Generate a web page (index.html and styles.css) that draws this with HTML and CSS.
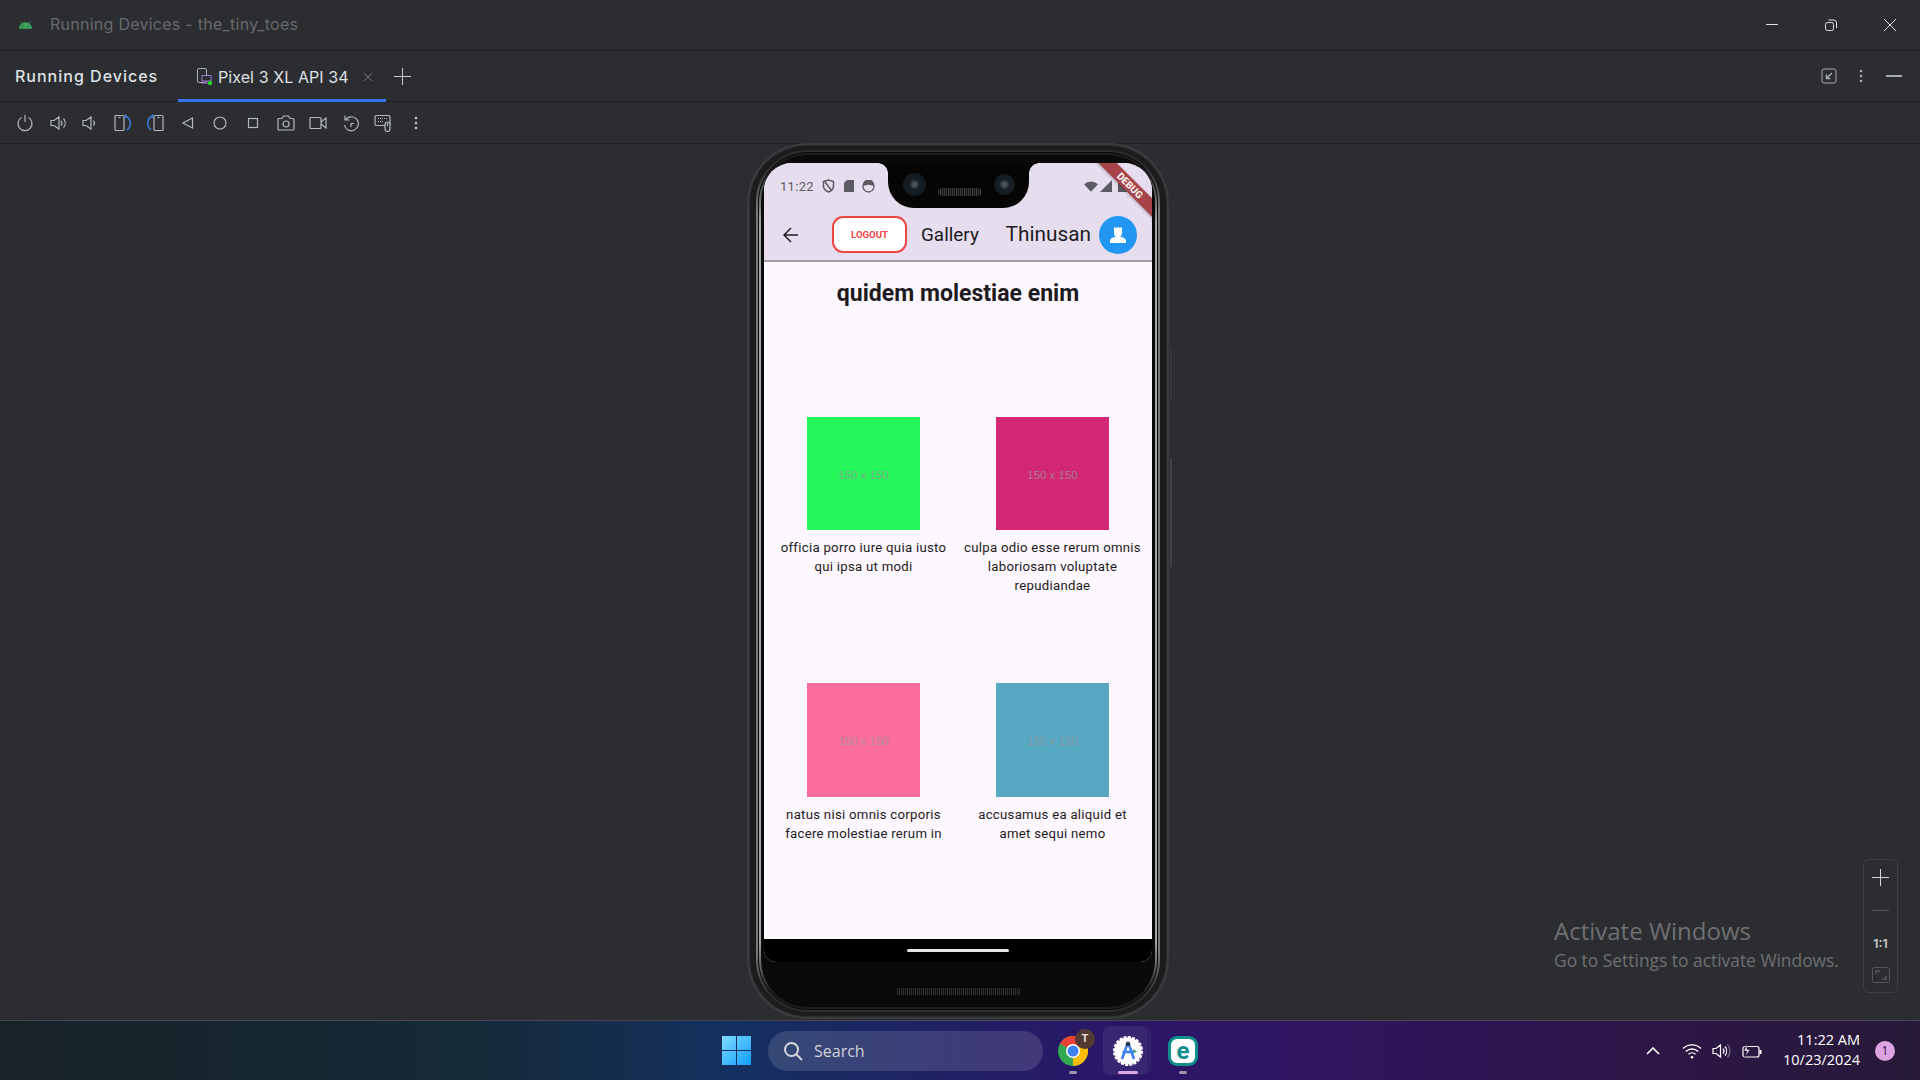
FILE: index.html
```html
<!DOCTYPE html>
<html lang="en">
<head>
<meta charset="utf-8">
<title>Running Devices - the_tiny_toes</title>
<link rel="stylesheet" href="styles.css">
</head>
<body>
<div class="app">
  <header class="titlebar">
    <svg class="android" viewBox="0 0 14 9" width="13" height="9"><path d="M0 9a7 7 0 0 1 3-5.600L2 1.400l.6-.3 1.100 2a6 6 0 0 1 6.600 0l1.100-2 .6.3-1 2A7 7 0 0 1 14 9z" fill="#3fa45f"/><circle cx="4" cy="6" r=".7" fill="#2b2d30"/><circle cx="10" cy="6" r=".7" fill="#2b2d30"/></svg>
    <span class="title">Running Devices - the_tiny_toes</span>
    <div class="winctl">
      <svg width="14" height="14" viewBox="0 0 14 14"><path d="M1 6.500h12" stroke="#dfe1e5" fill="none"/></svg>
      <svg width="14" height="14" viewBox="0 0 14 14" fill="none" stroke="#dfe1e5"><rect x="1.500" y="4.500" width="8" height="8" rx="2"/><path d="M4.500 2h5a3 3 0 0 1 3 3v5"/></svg>
      <svg width="14" height="14" viewBox="0 0 14 14"><path d="M1 1l12 12M13 1L1 13" stroke="#dfe1e5" fill="none"/></svg>
    </div>
  </header>
  <nav class="tabbar">
    <span class="toolname">Running Devices</span>
    <div class="tab">
      <svg width="18" height="18" viewBox="0 0 18 18" fill="none"><rect x="1.500" y="0.500" width="9" height="14" rx="1.500" stroke="#a8adb3"/><rect x="6" y="7.500" width="9" height="5.500" fill="#2b2d30" stroke="#9f7ad8"/><path d="M5 15h10" stroke="#9f7ad8"/><circle cx="14" cy="15" r="2.200" fill="#25d625"/></svg>
      <span class="tablabel">Pixel 3 XL API 34</span>
      <svg class="tabclose" width="10" height="10" viewBox="0 0 10 10"><path d="M1 1l8 8M9 1L1 9" stroke="#6f7276" fill="none"/></svg>
    </div>
    <svg class="tabplus" width="17" height="17" viewBox="0 0 17 17"><path d="M8.500 0v17M0 8.500h17" stroke="#c9ccd1" fill="none"/></svg>
    <div class="tabtools">
      <svg class="restore-ic" width="16" height="16" viewBox="0 0 16 16" fill="none" stroke="#a8abb0"><rect x="1" y="1" width="14" height="14" rx="2"/><path d="M11 5L6 10M5.500 6.500V10.500H9.500" stroke-width="1.500"/></svg>
      <svg width="4" height="14" viewBox="0 0 4 14" fill="#a8abb0"><circle cx="2" cy="2" r="1.300"/><circle cx="2" cy="7" r="1.300"/><circle cx="2" cy="12" r="1.300"/></svg>
      <svg width="16" height="2" viewBox="0 0 16 2"><path d="M0 1h16" stroke="#a8abb0" stroke-width="2"/></svg>
    </div>
  </nav>
  <div class="toolbar">
    <span class="tool"><svg width="18" height="18" viewBox="0 0 18 18" class="ic"><path d="M5.500 3.500a7 7 0 1 0 7 0M9 1v7"/></svg></span>
    <span class="tool"><svg width="18" height="18" viewBox="0 0 18 18" class="ic nudge-r"><path d="M1 6.500h3L9 3v12l-5-3.500H1zM11 6.500a4 4 0 0 1 0 5M13.500 4.500a7 7 0 0 1 0 9"/></svg></span>
    <span class="tool"><svg width="18" height="18" viewBox="0 0 18 18" class="ic nudge-r"><path d="M1 6.500h3L9 3v12l-5-3.500H1zM11.500 6.500a4 4 0 0 1 0 5"/></svg></span>
    <span class="tool"><svg width="20" height="18" viewBox="0 0 20 18" class="ic nudge-r"><rect x="1" y="1.500" width="9" height="15" rx="1"/><path d="M4.500 3.500h2"/><path class="blue" d="M12 2.500c5 2 6 9 1 13.500M11 .5l1.500 2-2 1.500"/></svg></span>
    <span class="tool"><svg width="20" height="18" viewBox="0 0 20 18" class="ic nudge-l"><rect x="10" y="1.500" width="9" height="15" rx="1"/><path d="M13.500 3.500h2"/><path class="blue" d="M8 2.500c-5 2-6 9-1 13.500M9 .5l-1.500 2 2 1.500"/></svg></span>
    <span class="tool"><svg width="14" height="14" viewBox="0 0 14 14" class="ic"><path d="M11.500 2v10L2 7z"/></svg></span>
    <span class="tool"><svg width="14" height="14" viewBox="0 0 14 14" class="ic"><circle cx="7" cy="7" r="6"/></svg></span>
    <span class="tool"><svg width="12" height="12" viewBox="0 0 12 12" class="ic"><rect x="1.500" y="1.500" width="9" height="9"/></svg></span>
    <span class="tool"><svg width="18" height="18" viewBox="0 0 18 18" class="ic"><path d="M1 5.500a1 1 0 0 1 1-1h3L6.500 2h5L13 4.500h3a1 1 0 0 1 1 1V15a1 1 0 0 1-1 1H2a1 1 0 0 1-1-1z"/><circle cx="9" cy="10" r="3"/></svg></span>
    <span class="tool"><svg width="18" height="14" viewBox="0 0 18 14" class="ic"><rect x="1" y="1.500" width="11" height="11" rx="1"/><path d="M12 6l5-4v10l-5-4"/></svg></span>
    <span class="tool"><svg width="16" height="18" viewBox="0 0 16 18" class="ic"><path d="M2.500 6a7 7 0 1 1-1 5M2 1.500v4.500h4.500M8 13V9.500h3"/></svg></span>
    <span class="tool"><svg width="18" height="18" viewBox="0 0 18 18" class="ic"><rect x="1" y="1.500" width="15" height="10" rx="1.500"/><path d="M4 4.500h9M4 7.500h5" stroke-dasharray="1 1"/><rect x="11" y="8" width="5" height="9.500" rx="2.500" fill="#2b2d30"/><path d="M13.500 9v3"/></svg></span>
    <span class="tool"><svg width="4" height="14" viewBox="0 0 4 14" fill="#c4c7cc"><circle cx="2" cy="2" r="1.300"/><circle cx="2" cy="7" r="1.300"/><circle cx="2" cy="12" r="1.300"/></svg></span>
  </div>
  <main class="main">
    <section class="phone">
      <span class="sidebtn power"></span>
      <span class="sidebtn volume"></span>
      <div class="ring">
        <div class="ringgap">
          <div class="ring ring2">
            <div class="bezel">
              <div class="screen">
                <div class="notch">
                  <span class="cam"></span>
                  <span class="speaker"></span>
                  <span class="cam small"></span>
                </div>
                <div class="debug">DEBUG</div>
                <div class="statusbar">
                  <span class="clock">11:22</span>
                  <svg width="13" height="14" viewBox="0 0 13 14" fill="none" stroke="#5c5a62" stroke-width="1.500"><path d="M1.500 2.500L6.500 1l5 1.500V7c0 3-2.500 5-5 6-2.500-1-5-3-5-6zM3 3l7 9"/></svg>
                  <svg width="10" height="12" viewBox="0 0 10 12" fill="#5c5a62"><path d="M3 0h7v12H0V3z"/></svg>
                  <svg width="13" height="13" viewBox="0 0 13 13" fill="none" stroke="#5c5a62" stroke-width="1.300"><circle cx="6.500" cy="6.500" r="5.500"/><path d="M1.500 5a5 5 0 0 1 10 0c-3 0-3-1-5-1s-2 1-5 1z" fill="#5c5a62"/></svg>
                  <div class="status-right">
                    <svg width="14" height="11" viewBox="0 0 15 11" fill="#5c5a62"><path d="M0 3a11 11 0 0 1 15 0l-7.500 8z"/></svg>
                    <svg width="12" height="12" viewBox="0 0 12 12" fill="#5c5a62"><path d="M12 0v12H0z"/></svg>
                    <svg class="battery" width="9" height="12" viewBox="0 0 9 12" fill="#5c5a62"><path d="M0 0h9v12H0z"/></svg>
                  </div>
                </div>
                <div class="appbar">
                  <svg class="back" width="16" height="16" viewBox="0 0 16 16" fill="none" stroke="#1d1b20" stroke-width="1.500"><path d="M15 8H1.500M8 1L1 8l7 7"/></svg>
                  <button class="logout">LOGOUT</button>
                  <span class="apptitle">Gallery</span>
                  <span class="username">Thinusan</span>
                  <span class="avatar"><svg width="20" height="20" viewBox="0 0 20 20" fill="#fff"><path d="M6 2l2 1 2-1 2 1 2-1v6a4 4 0 0 1-8 0zM2 18v-2c0-3 4-4.500 8-4.500s8 1.500 8 4.500v2z"/></svg></span>
                </div>
                <div class="content">
                  <h1 class="heading">quidem molestiae enim</h1>
                  <div class="gallery">
                    <figure class="item">
                      <div class="thumb green">150 x 150</div>
                      <figcaption>officia porro iure quia iusto qui ipsa ut modi</figcaption>
                    </figure>
                    <figure class="item">
                      <div class="thumb magenta">150 x 150</div>
                      <figcaption>culpa odio esse rerum omnis laboriosam voluptate repudiandae</figcaption>
                    </figure>
                    <figure class="item">
                      <div class="thumb tall pink">150 x 150</div>
                      <figcaption>natus nisi omnis corporis facere molestiae rerum in</figcaption>
                    </figure>
                    <figure class="item">
                      <div class="thumb tall teal">150 x 150</div>
                      <figcaption>accusamus ea aliquid et amet sequi nemo</figcaption>
                    </figure>
                  </div>
                </div>
                <div class="navbar"><span class="home"></span></div>
              </div>
              <span class="bottom-speaker"></span>
            </div>
          </div>
        </div>
      </div>
    </section>
    <div class="watermark">
      <div class="wm1">Activate Windows</div>
      <div class="wm2">Go to Settings to activate Windows.</div>
    </div>
    <div class="zoomctl">
      <svg width="17" height="17" viewBox="0 0 17 17"><path d="M8.500 0v17M0 8.500h17" stroke="#d5d7db" fill="none"/></svg>
      <svg width="17" height="17" viewBox="0 0 17 17"><path d="M0 8.500h17" stroke="#55575a" fill="none"/></svg>
      <span class="one">1:1</span>
      <svg width="18" height="16" viewBox="0 0 18 16" fill="none" stroke="#55575a"><rect x=".5" y=".5" width="17" height="15" rx="2"/><path d="M4 7V4h4M14 9v3h-4" stroke-width="1.500"/></svg>
    </div>
  </main>
  <footer class="taskbar">
    <svg class="winlogo" width="29" height="29" viewBox="0 0 29 29"><defs><linearGradient id="w" x1="0" y1="0" x2="1" y2="1"><stop offset="0" stop-color="#7fdcff"/><stop offset="1" stop-color="#0f9dfb"/></linearGradient></defs><path d="M0 0h14v14H0zM15 0h14v14H15zM0 15h14v14H0zM15 15h14v14H15z" fill="url(#w)"/></svg>
    <div class="search">
      <svg width="20" height="20" viewBox="0 0 20 20" fill="none" stroke="#d6d6de" stroke-width="2"><circle cx="8.500" cy="8.500" r="6.500"/><path d="M13 13l6 6"/></svg>
      <span>Search</span>
    </div>
    <div class="tbicon chrome">
      <svg width="30" height="30" viewBox="0 0 30 30"><circle cx="15" cy="15" r="15" fill="#34a853"/><path d="M15 15L2 7.500A15 15 0 0 1 28 7.500z" fill="#ea4335"/><path d="M15 15l13-7.500A15 15 0 0 1 15 30z" fill="#fbbc04"/><circle cx="15" cy="15" r="7" fill="#fff"/><circle cx="15" cy="15" r="5.500" fill="#3b82f0"/></svg>
      <span class="tbadge">T</span>
      <span class="dot"></span>
    </div>
    <div class="tbicon studio">
      <svg class="studio-ic" width="30" height="30" viewBox="0 0 30 30"><circle cx="15" cy="15" r="13.500" fill="#fff" stroke="#fff" stroke-width="3" stroke-dasharray="3 1.200"/><path d="M20 13l4 2.500-4 2z" fill="#3fa45f"/><path d="M15 6l-6 17M15 6l6 17M9.500 16h11" stroke="#3b7cf0" stroke-width="2.500" fill="none"/><circle cx="15" cy="8" r="2.300" fill="#27374f"/></svg>
      <span class="dot active"></span>
    </div>
    <div class="tbicon eset">
      <span class="esetlogo"><span>e</span></span>
      <span class="dot"></span>
    </div>
    <div class="tray">
      <svg class="chev" width="14" height="8" viewBox="0 0 14 8" fill="none" stroke="#fff" stroke-width="1.600"><path d="M1 7l6-6 6 6"/></svg>
      <svg class="trayic" width="20" height="16" viewBox="0 0 20 16" fill="none" stroke="#fff" stroke-width="1.300"><path d="M1 5.500a13 13 0 0 1 18 0M3.800 8.500a9 9 0 0 1 12.400 0M6.500 11.300a5 5 0 0 1 7 0"/><circle cx="10" cy="14.300" r="1.300" fill="#fff" stroke="none"/></svg>
      <svg class="trayic" width="20" height="16" viewBox="0 0 20 16" fill="none" stroke="#fff" stroke-width="1.200"><path d="M1 5.500h3L8.500 2v12L4 10.500H1zM11 5.500a4 4 0 0 1 0 5M13 3.500a7 7 0 0 1 0 9"/><path d="M15.500 1.500a10 10 0 0 1 0 13" stroke="#77707f"/></svg>
      <svg class="trayic" width="20" height="14" viewBox="0 0 20 14" fill="none" stroke="#fff" stroke-width="1.200"><rect x="1" y="2.500" width="16" height="10.500" rx="2"/><path d="M18.500 6v4" stroke-width="2"/><path d="M5 0L2 7h3l-2 6 5-7.500H5z" fill="#fff" stroke="#2a1848" stroke-width=".6"/></svg>
      <div class="datetime"><span>11:22 AM</span><span>10/23/2024</span></div>
      <span class="notif">1</span>
    </div>
  </footer>
</div>
</body>
</html>
```

FILE: styles.css
```css
* { box-sizing: border-box; }
html, body { margin: 0; padding: 0; }
body { width: 1920px; height: 1080px; overflow: hidden; background: #2b2d30; font-family: Inter, "Liberation Sans", sans-serif; }
.app { display: flex; flex-direction: column; height: 1080px; }

.titlebar { height: 51px; flex: none; display: flex; align-items: center; border-bottom: 1px solid #1e1f22; padding-left: 19px; padding-bottom: 1px; }
.android { margin-right: 18px; }
.title { font-size: 16px; letter-spacing: .26px; color: #67696d; margin-top: -2px; }
.winctl { margin-left: auto; display: flex; gap: 45px; padding-right: 23px; padding-top: 1px; }

.tabbar { height: 51px; flex: none; display: flex; align-items: center; border-bottom: 1px solid #1e1f22; padding-left: 15px; position: relative; }
.toolname { width: 163px; font-size: 16px; font-weight: 500; letter-spacing: 1px; color: #dfe1e5; }
.tab { width: 208px; height: 51px; display: flex; align-items: center; padding: 5px 0 0 18px; gap: 3px; border-bottom: 3px solid #3574f0; }
.tablabel { font-size: 16px; letter-spacing: .08px; color: #dfe1e5; margin-left: 1px; }
.tabclose { margin-left: 11px; }
.tabplus { margin-left: 8px; }
.tabtools { margin-left: auto; display: flex; align-items: center; gap: 23.500px; padding-right: 18px; }
.restore-ic { margin-right: -2px; }

.toolbar { height: 42px; flex: none; display: flex; align-items: center; padding-left: 8.500px; border-bottom: 1px solid #1e1f22; }
.tool { width: 32.600px; display: flex; justify-content: center; align-items: center; }
.ic { fill: none; stroke: #b4b7bc; stroke-width: 1.200; }
.ic .blue { stroke: #3f7fe8; stroke-width: 1.400; }
.nudge-r { margin-left: 3px; }
.nudge-l { margin-right: 2px; }

.main { flex: 1; position: relative; padding: 1px 0 0 749px; min-height: 0; }
.phone { position: relative; width: 418px; height: 872px; border: 1px solid #2a2b2c; border-radius: 58px; background: #1b1c1d; padding: 4px 6px; box-shadow: 0 0 0 2px #3a3b3d; }
.sidebtn { position: absolute; right: -6px; width: 2px; background: #404245; border-radius: 2px; }
.power { top: 201px; height: 53px; background: #35373a; }
.volume { top: 312px; height: 109px; }
.ring { height: 100%; padding: 2px; border-radius: 52px; background: linear-gradient(180deg, #2d2d2e 0, #2d2d2e 2%, #77797b 7%, #77797b 93%, #2d2d2e 98%, #2d2d2e 100%); }
.ringgap { height: 100%; padding: 1px; border-radius: 50px; background: #0a0a0a; }
.ring2 { border-radius: 49px; background: linear-gradient(180deg, #1d1d1e 0, #1d1d1e 2%, #a4a6a8 8%, #a4a6a8 92%, #1d1d1e 98%, #1d1d1e 100%); }
.bezel { position: relative; height: 100%; border-radius: 47px; background: #0a0a0a; padding: 8px 3px 0; }
.screen { position: relative; height: 799px; border-radius: 28px 28px 12px 12px; overflow: hidden; background: #fdf7ff; display: flex; flex-direction: column; }

.notch { position: absolute; top: 0; left: 124px; width: 141px; height: 45px; background: #050505; border-radius: 0 0 26px 26px; display: flex; align-items: center; justify-content: center; gap: 23px; padding-bottom: 3px; z-index: 2; }
.notch::before, .notch::after { content: ""; position: absolute; top: 0; width: 10px; height: 10px; }
.notch::before { left: -10px; background: radial-gradient(circle at 0 100%, transparent 9.500px, #050505 10px); }
.notch::after { right: -10px; background: radial-gradient(circle at 100% 100%, transparent 9.500px, #050505 10px); }
.cam { width: 23px; height: 23px; border-radius: 50%; background: radial-gradient(circle, #46525a 0 2px, #182026 5px, #141a1e 11px); }
.cam.small { width: 21px; height: 21px; }
.speaker { width: 44px; height: 8px; border-radius: 4px; background: repeating-linear-gradient(90deg, #3a3a3a 0 1px, #151515 1px 2px); margin: 16px -11px 0; }

.debug { position: absolute; top: 15.500px; right: -38px; width: 120px; height: 13px; background: #a64448; color: #fff; font: 700 10px/13px Roboto, sans-serif; text-align: center; transform: rotate(45deg); z-index: 3; box-shadow: 0 1px 3px rgba(0,0,0,.25); }

.statusbar { height: 37px; flex: none; background: #e6deef; display: flex; align-items: center; gap: 8.500px; padding: 9px 0 0 16px; }
.clock { font: 400 13px Roboto, sans-serif; color: #5c5a62; letter-spacing: .3px; }
.status-right { margin-left: auto; display: flex; align-items: center; gap: 2px; padding-right: 25px; }
.battery { margin-left: 4px; }

.appbar { height: 62px; flex: none; background: #e6deef; border-bottom: 2px solid #a39ea6; display: flex; align-items: center; padding: 9px 15px 0 19px; }
.back { flex: none; }
.logout { width: 75px; height: 37px; margin-left: 33px; background: #fff; border: 2px solid #ef4444; border-radius: 11px; color: #ef4444; font: 700 9.600px Roboto, sans-serif; padding: 0; }
.apptitle { font: 400 18.900px Roboto, sans-serif; color: #1d1b20; margin-left: 14px; }
.username { font: 400 20.800px Roboto, sans-serif; color: #1d1b20; margin-left: auto; margin-top: -1px; }
.avatar { width: 38px; height: 38px; margin-left: 8px; border-radius: 50%; background: #2196f3; display: flex; align-items: center; justify-content: center; }

.content { flex: 1; min-height: 0; color: #1d1b20; }
.heading { font: 700 23.050px/30px Roboto, sans-serif; text-align: center; margin: 0; padding-top: 17px; }
.gallery { display: grid; grid-template-columns: 189px 189px; grid-template-rows: 266px 200px; padding: 0 5px; margin-top: 108px; }
.item { margin: 0; display: flex; flex-direction: column; align-items: center; }
.thumb { width: 113px; height: 113px; padding-top: 2px; display: flex; align-items: center; justify-content: center; font: 400 11.500px "Liberation Sans", sans-serif; color: rgba(150,150,150,.8); }
.thumb.tall { height: 114px; }
.green { background: #25f65a; }
.magenta { background: #d32776; }
.pink { background: #fb6d9c; }
.teal { background: #56a8c3; }
figcaption { margin-top: 8px; width: 178px; text-align: center; font: 450 13.200px/19px Roboto, sans-serif; letter-spacing: .28px; }

.navbar { height: 23px; flex: none; background: #000; display: flex; justify-content: center; padding-top: 10px; }
.home { width: 102px; height: 3px; border-radius: 2px; background: #e4e4e4; }
.bottom-speaker { position: absolute; left: 50%; bottom: 12px; width: 123px; height: 7px; margin-left: -61px; background: repeating-linear-gradient(90deg, #2e2e2e 0 1px, #0e0e0e 1px 2px); }

.watermark { position: absolute; left: 1554px; top: 771px; color: #6f7072; font-family: "Open Sans", sans-serif; }
.wm1 { font-size: 24px; line-height: 32px; }
.wm2 { font-size: 17.400px; line-height: 24px; margin-top: 1px; }
.zoomctl { position: absolute; left: 1863px; top: 715px; width: 35px; height: 134px; border: 1px solid #3e3f42; border-radius: 6px; display: flex; flex-direction: column; align-items: center; justify-content: space-between; padding: 9px 0 9px; }
.one { font: 700 12px Inter, sans-serif; color: #c0c2c6; }

.taskbar { height: 60px; flex: none; display: flex; align-items: center; padding-left: 722px; border-top: 1px solid #4a4459; background: linear-gradient(90deg, #182327 0, #152a38 25%, #143060 38%, #2a1668 58%, #2f1560 68%, #2e1648 85%, #261a38 100%); }
.search { width: 275px; height: 40px; margin-left: 17px; border-radius: 20px; background: rgba(255,255,255,.13); display: flex; align-items: center; gap: 11px; padding-left: 15px; color: #d2d2da; font: 400 16px "Open Sans", sans-serif; }
.tbicon { position: relative; display: flex; align-items: center; justify-content: center; }
.chrome { width: 30px; height: 30px; margin-left: 15px; }
.tbadge { position: absolute; top: -7px; right: -7px; width: 20px; height: 20px; border-radius: 50%; background: #533a32; color: #e8e2de; font: 700 11px/20px Roboto, sans-serif; text-align: center; }
.dot { position: absolute; left: 50%; margin-left: -4px; bottom: -8px; width: 8px; height: 3px; border-radius: 2px; background: #9c98a8; }
.studio { width: 44px; height: 49px; margin-left: 15px; border-radius: 6px; background: rgba(255,255,255,.07); box-shadow: 5px 0 0 -1px rgba(255,255,255,.04); }
.studio-ic { margin-left: 6px; }
.studio .dot.active { width: 20px; margin-left: -7px; bottom: 1px; background: #e0a6ea; }
.eset { width: 30px; height: 30px; margin-left: 21px; }
.esetlogo { width: 30px; height: 30px; border-radius: 9px; background: #fff; border: 3px solid #0f8e8c; display: flex; align-items: center; justify-content: center; color: #0f8e8c; font: 700 24px/22px Roboto, sans-serif; }
.tray { margin-left: auto; display: flex; align-items: center; height: 100%; color: #fff; padding-right: 25px; }
.trayic { margin-left: 10px; }
.chev { margin-right: 12px; }
.datetime { display: flex; flex-direction: column; align-items: flex-end; width: 95px; font: 400 14.500px/20px "Open Sans", sans-serif; margin: -2px 0 0 3px; }
.notif { width: 20px; height: 20px; border-radius: 50%; background: #dfa3e3; color: #2a1848; font: 500 12px/20px "Open Sans", sans-serif; text-align: center; margin-left: 15px; }
```
